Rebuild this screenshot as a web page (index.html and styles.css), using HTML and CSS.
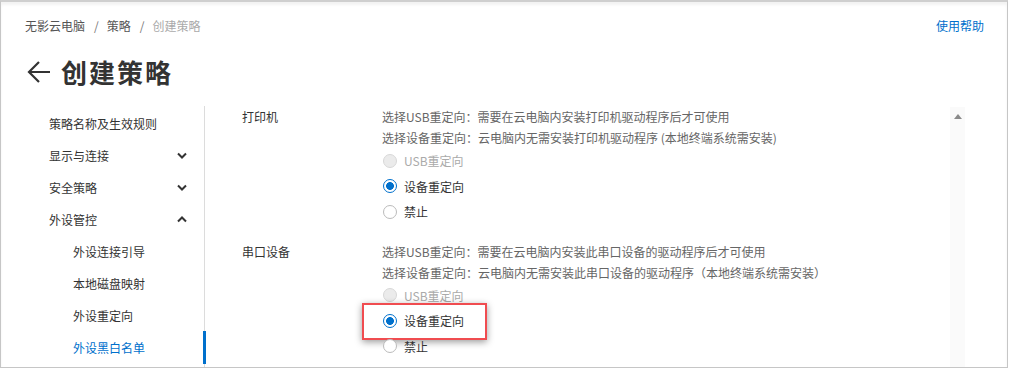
FILE: index.html
```html
<!DOCTYPE html>
<html lang="zh">
<head>
<meta charset="utf-8">
<title>创建策略</title>
<link rel="stylesheet" href="styles.css">
</head>
<body>
<div class="frame">
  <header class="header">
    <div class="topbar">
      <nav class="crumbs">
        <span class="crumb">无影云电脑</span><span class="sep">/</span><span class="crumb">策略</span><span class="sep">/</span><span class="crumb current">创建策略</span>
      </nav>
      <a class="help">使用帮助</a>
    </div>
    <div class="title-row">
      <svg class="back" width="24" height="24" viewBox="0 0 24 24"><path d="M23 12H2M12 2L2 12l10 10" fill="none" stroke="#333" stroke-width="2.2"/></svg>
      <h1 class="title">创建策略</h1>
    </div>
  </header>
  <div class="main">
    <aside class="side">
      <div class="item">策略名称及生效规则</div>
      <div class="item">显示与连接<svg class="chev" width="10" height="7" viewBox="0 0 10 7"><path d="M1 1.5l4 4 4-4" fill="none" stroke="#333" stroke-width="2"/></svg></div>
      <div class="item">安全策略<svg class="chev" width="10" height="7" viewBox="0 0 10 7"><path d="M1 1.5l4 4 4-4" fill="none" stroke="#333" stroke-width="2"/></svg></div>
      <div class="item">外设管控<svg class="chev" width="10" height="7" viewBox="0 0 10 7"><path d="M1 5.5l4-4 4 4" fill="none" stroke="#333" stroke-width="2"/></svg></div>
      <div class="item sub">外设连接引导</div>
      <div class="item sub">本地磁盘映射</div>
      <div class="item sub">外设重定向</div>
      <div class="item sub active">外设黑白名单</div>
    </aside>
    <section class="content">
      <div class="form">
        <div class="field">
          <div class="label">打印机</div>
          <div class="control">
            <p class="desc">选择USB重定向：需要在云电脑内安装打印机驱动程序后才可使用</p>
            <p class="desc">选择设备重定向：云电脑内无需安装打印机驱动程序 (本地终端系统需安装)</p>
            <div class="radio disabled"><span class="dot"></span>USB重定向</div>
            <div class="radio checked"><span class="dot"></span>设备重定向</div>
            <div class="radio"><span class="dot"></span>禁止</div>
          </div>
        </div>
        <div class="field">
          <div class="label">串口设备</div>
          <div class="control">
            <p class="desc">选择USB重定向：需要在云电脑内安装此串口设备的驱动程序后才可使用</p>
            <p class="desc">选择设备重定向：云电脑内无需安装此串口设备的驱动程序（本地终端系统需安装）</p>
            <div class="radio disabled"><span class="dot"></span>USB重定向</div>
            <div class="radio checked highlight"><span class="dot"></span>设备重定向</div>
            <div class="radio"><span class="dot"></span>禁止</div>
          </div>
        </div>
      </div>
      <div class="scrollbar"><span class="arrow"></span></div>
    </section>
  </div>
</div>
</body>
</html>
```

FILE: styles.css
```css
* { box-sizing: border-box; }
html, body { margin: 0; padding: 0; background: #fff; overflow: hidden; }
body {
  font-family: "Noto Sans CJK SC", "Liberation Sans", sans-serif;
  font-size: 12px;
  color: #333;
}
.frame {
  width: 1008px;
  height: 368px;
  border: 1px solid #c6c6c6;
  border-top: 2px solid #cfcfcf;
  box-shadow: inset 0 3px 3px rgba(0,0,0,0.05);
  display: flex;
  flex-direction: column;
  overflow: hidden;
}
.header { padding: 16px 23px 0 24px; }
.topbar { display: flex; justify-content: space-between; align-items: center; height: 16px; line-height: 16px; }
.crumbs { color: #555; }
.sep { margin: 0 8px 0 9px; color: #777; }
.current { color: #aaa; }
.help { color: #0070cc; text-decoration: none; }
.title-row { display: flex; align-items: center; height: 36px; margin-top: 20px; }
.back { margin-left: 2px; margin-right: 10px; }
.title { margin: 0; font-size: 26px; font-weight: 700; color: #333; line-height: 36px; letter-spacing: 2px; }
.main { display: flex; margin-top: 16px; flex: 1; min-height: 0; }
.side {
  width: 204px;
  border-right: 1px solid #dcdcdc;
  padding-top: 1px;
  flex-shrink: 0;
}
.item {
  position: relative;
  display: flex;
  align-items: center;
  justify-content: space-between;
  height: 32px;
  padding-left: 48px;
  padding-right: 17px;
  color: #333;
}
.item.sub { padding-left: 72px; }
.item.active { color: #0070cc; }
.item.active::after {
  content: "";
  position: absolute;
  right: -2px;
  top: 0;
  width: 3px;
  height: 33px;
  background: #0070cc;
}
.content { flex: 1; display: flex; min-width: 0; }
.form { flex: 1; padding-left: 37px; }
.field { display: flex; margin-bottom: 16px; }
.label { width: 140px; line-height: 21px; color: #333; }
.control { flex: 1; }
.desc { margin: 0; line-height: 21px; color: #666; white-space: nowrap; }
.radio {
  position: relative;
  display: flex;
  align-items: center;
  height: 25.5px;
  padding-left: 1px;
  color: #333;
}
.radio .dot {
  width: 14px;
  height: 14px;
  border-radius: 50%;
  border: 1px solid #bbb;
  background: #fff;
  margin-right: 7px;
  flex-shrink: 0;
}
.radio.disabled { color: #aaa; }
.radio.disabled .dot { background: #ebebeb; border-color: #d8d8d8; }
.radio.checked .dot { border: 1.5px solid #0070cc; background: radial-gradient(circle, #0070cc 0 3.6px, #fff 4.2px); }
.radio.highlight::before {
  content: "";
  position: absolute;
  left: -20px;
  top: -5px;
  width: 121px;
  height: 33px;
  border: 2px solid #f04c50;
  box-shadow: 0 2px 7px rgba(0,0,0,0.4);
}
.scrollbar {
  width: 15px;
  margin-right: 42px;
  margin-top: 1px;
  background: #fafafa;
  display: flex;
  justify-content: center;
  padding-top: 7px;
}
.arrow {
  width: 0; height: 0;
  border-left: 4.5px solid transparent;
  border-right: 4.5px solid transparent;
  border-bottom: 5px solid #8a8a8a;
}
```
